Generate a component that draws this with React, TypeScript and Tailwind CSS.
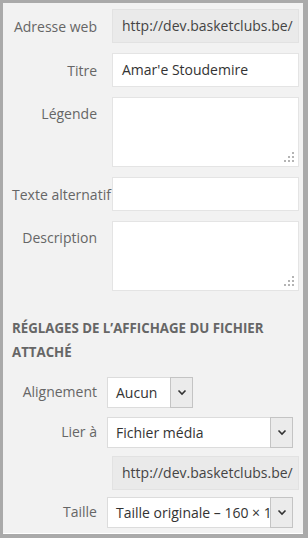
import React from "react";

const font = { fontFamily: '"Open Sans", "Noto Sans", sans-serif' };

function Grip() {
  return (
    <svg className="absolute bottom-[3px] right-[3px]" width="12" height="12" viewBox="0 0 12 12">
      <rect x="9" y="1" width="2" height="2" fill="#b4b4b4" />
      <rect x="5" y="5" width="2" height="2" fill="#b4b4b4" />
      <rect x="9" y="5" width="2" height="2" fill="#b4b4b4" />
      <rect x="1" y="9" width="2" height="2" fill="#b4b4b4" />
      <rect x="5" y="9" width="2" height="2" fill="#b4b4b4" />
      <rect x="9" y="9" width="2" height="2" fill="#b4b4b4" />
    </svg>
  );
}

function Chevron() {
  return (
    <svg width="10" height="7" viewBox="0 0 10 7">
      <path d="M1.5 1.5 L5 5 L8.5 1.5" fill="none" stroke="#333" strokeWidth="1.6" />
    </svg>
  );
}

function Row({ label, children, tall }: { label: string; children: React.ReactNode; tall?: boolean }) {
  return (
    <div className="flex items-start">
      <label
        className={`w-[85px] shrink-0 whitespace-nowrap text-right text-[14px] text-[#666] ${tall ? "pt-[6px]" : "pt-[7px]"}`}
      >
        {label}
      </label>
      <div className="ml-[15px] w-[187px] shrink-0">{children}</div>
    </div>
  );
}

function Field({ value, readOnly }: { value?: string; readOnly?: boolean }) {
  return (
    <div
      className={`h-[34px] overflow-hidden whitespace-nowrap border pl-[9px] pr-[2px] text-[14px] leading-[32px] ${
        readOnly ? "border-[#e2e2e2] bg-[#eaeaea] text-[#444]" : "border-[#e4e4e4] bg-white text-[#333]"
      }`}
    >
      {value}
    </div>
  );
}

function Area() {
  return <div className="relative h-[70px] border border-[#e4e4e4] bg-white"><Grip /></div>;
}

function Select({ value, width }: { value: string; width: string }) {
  return (
    <div className={`relative flex h-[31px] ${width} border border-[#dcdcdc] bg-white`}>
      <div className="flex-1 overflow-hidden whitespace-nowrap pl-[8px] text-[14px] leading-[29px] text-[#333]">
        {value}
      </div>
      <div className="-my-px -mr-px flex w-[23px] shrink-0 items-center justify-center border border-[#c4c4c4] bg-[#ebebeb]">
        <Chevron />
      </div>
    </div>
  );
}

function SetRow({ label, children }: { label: string; children: React.ReactNode }) {
  return (
    <div className="flex items-start">
      <label className="w-[85px] shrink-0 whitespace-nowrap pt-[4px] text-right text-[14px] text-[#666]">{label}</label>
      <div className="ml-[10px]">{children}</div>
    </div>
  );
}

export default function App() {
  return (
    <div className="h-[538px] w-[308px] bg-[#aaaaaa] pb-[4px] pl-[3px] pr-[5px] pt-[3px]" style={font}>
      <div className="h-full border-b border-white bg-[#f2f2f2] pl-[9px] pt-[6px]">
        <div className="flex flex-col gap-[10px]">
          <Row label="Adresse web">
            <Field value="http://dev.basketclubs.be/" readOnly />
          </Row>
          <Row label="Titre">
            <Field value="Amar'e Stoudemire" />
          </Row>
          <Row label="Légende" tall>
            <Area />
          </Row>
          <Row label="Texte alternatif">
            <Field />
          </Row>
          <Row label="Description" tall>
            <Area />
          </Row>
        </div>

        <h3 className="mt-[25px] pr-[20px] text-[13.25px] font-bold uppercase leading-[24px] text-[#666]">
          Réglages de l’affichage du fichier attaché
        </h3>

        <div className="mt-[13px] flex flex-col">
          <SetRow label="Alignement">
            <Select value="Aucun" width="w-[86px]" />
          </SetRow>
          <div className="mt-[9px]">
            <SetRow label="Lier à">
              <Select value="Fichier média" width="w-[186px]" />
            </SetRow>
          </div>
          <div className="ml-[100px] mt-[8px] w-[187px]">
            <Field value="http://dev.basketclubs.be/" readOnly />
          </div>
          <div className="mt-[7px]">
            <SetRow label="Taille">
              <Select value="Taille originale – 160 × 160" width="w-[186px]" />
            </SetRow>
          </div>
        </div>
      </div>
    </div>
  );
}
